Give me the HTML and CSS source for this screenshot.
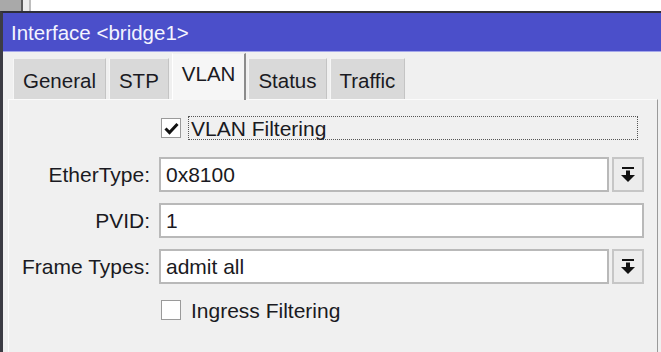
FILE: index.html
```html
<!DOCTYPE html>
<html lang="en">
<head>
  <meta charset="UTF-8" />
  <title>Interface &lt;bridge1&gt;</title>
  <link rel="stylesheet" href="styles.css">
</head>
<body>
  <div class="desk">
    <div class="desk-side"></div>
    <div class="desk-gap"></div>
  </div>
  <div class="window">
    <div class="titlebar">Interface &lt;bridge1&gt;</div>
    <div class="win-body">
      <div class="tabs">
        <div class="tab">General</div>
        <div class="tab">STP</div>
        <div class="tab active">VLAN</div>
        <div class="tab">Status</div>
        <div class="tab">Traffic</div>
      </div>
      <div class="panel">
        <div class="row check-row">
          <span></span>
          <div class="check">
            <span class="box">
              <svg width="15" height="13" viewBox="0 0 15 13"><polyline points="1.5,6.5 5.5,10.5 13.5,2" fill="none" stroke="#111" stroke-width="3"/></svg>
            </span>
            <span class="check-label focused">VLAN Filtering</span>
          </div>
        </div>
        <div class="row field-row">
          <label>EtherType:</label>
          <div class="combo">
            <div class="input">0x8100</div>
            <div class="drop">
              <svg width="14" height="16" viewBox="0 0 14 16"><rect x="1" y="0" width="12" height="2" fill="#111"/><rect x="5" y="3.5" width="4" height="5" fill="#111"/><polygon points="0,8 14,8 7,15" fill="#111"/></svg>
            </div>
          </div>
        </div>
        <div class="row field-row">
          <label>PVID:</label>
          <div class="combo">
            <div class="input">1</div>
          </div>
        </div>
        <div class="row field-row last">
          <label>Frame Types:</label>
          <div class="combo">
            <div class="input">admit all</div>
            <div class="drop">
              <svg width="14" height="16" viewBox="0 0 14 16"><rect x="1" y="0" width="12" height="2" fill="#111"/><rect x="5" y="3.5" width="4" height="5" fill="#111"/><polygon points="0,8 14,8 7,15" fill="#111"/></svg>
            </div>
          </div>
        </div>
        <div class="row check-row">
          <span></span>
          <div class="check">
            <span class="box"></span>
            <span class="check-label">Ingress Filtering</span>
          </div>
        </div>
      </div>
    </div>
  </div>
</body>
</html>
```

FILE: styles.css
```css
* { box-sizing: border-box; }
body {
  margin: 0;
  width: 661px;
  height: 352px;
  overflow: hidden;
  background: #fff;
  font-family: "Liberation Sans", Arial, sans-serif;
  font-size: 21px;
  color: #1a1a22;
}
.desk {
  display: flex;
  height: 11px;
}
.desk-side {
  width: 23px;
  background: #a9a9a9;
  border-right: 2px solid #5a5a5a;
}
.desk-gap {
  width: 8px;
  background: #ececec;
  border-right: 2px solid #bdbdbd;
}
.window {
  border-top: 2px solid #2e2e3a;
  border-left: 3px solid #3c3c44;
  height: 341px;
  background: #f0f0f0;
}
.titlebar {
  height: 39px;
  padding: 2px 0 0 8px;
  line-height: 36px;
  font-size: 20.5px;
  background: #4b4fca;
  border-bottom: 1px solid #a4a7ea;
  color: #f4f4ff;
}
.win-body {
  padding: 1px 3px 0 5px;
}
.tabs {
  display: flex;
  align-items: flex-end;
  height: 46px;
  padding-left: 5px;
  font-size: 20.5px;
}
.tab {
  height: 41px;
  margin-right: 3px;
  padding: 2px 9px 0 9px;
  line-height: 39px;
  background: #d9d9d9;
  border-left: 1px solid #f6f6f6;
  border-top: 1px solid #f0f0f0;
  border-right: 1px solid #c4c4c4;
}
.tab.active {
  height: 47px;
  margin-bottom: -1px;
  margin-right: 2px;
  padding-top: 0;
  line-height: 40px;
  background: #f6f6f6;
  border-left: 1px solid #fff;
  border-right: 2px solid #8c8c8c;
  position: relative;
  z-index: 1;
}
.panel {
  height: 260px;
  padding: 16px 13px 0 0;
  border-top: 1px solid #fbfbfb;
  border-left: 1px solid #fbfbfb;
  border-right: 1px solid #9a9a9a;
}
.row {
  display: grid;
  grid-template-columns: 141px 1fr;
  column-gap: 9px;
  align-items: center;
}
.row label {
  text-align: right;
}
.check-row {
  height: 24px;
  margin-bottom: 17px;
}
.field-row {
  height: 35px;
  margin-bottom: 11px;
}
.field-row.last {
  margin-bottom: 14px;
}
.check {
  display: flex;
  align-items: center;
  height: 24px;
}
.box {
  display: flex;
  align-items: center;
  justify-content: center;
  width: 20px;
  height: 20px;
  margin-left: 2px;
  background: #fff;
  border: 1px solid #9a9a9a;
}
.check-label {
  flex: 1;
  height: 24px;
  margin: 0 6px 0 7px;
  padding-left: 2px;
  line-height: 23px;
  border: 1px dotted transparent;
}
.check-label.focused {
  border-color: #555;
}
.combo {
  display: flex;
  gap: 3px;
  height: 35px;
}
.input {
  flex: 1;
  padding-left: 5px;
  line-height: 31px;
  background: #fff;
  border: 2px solid #b9b9b9;
}
.drop {
  display: flex;
  align-items: center;
  justify-content: center;
  width: 32px;
  background: #ececec;
  border: 2px solid #c6c6c6;
}
```
